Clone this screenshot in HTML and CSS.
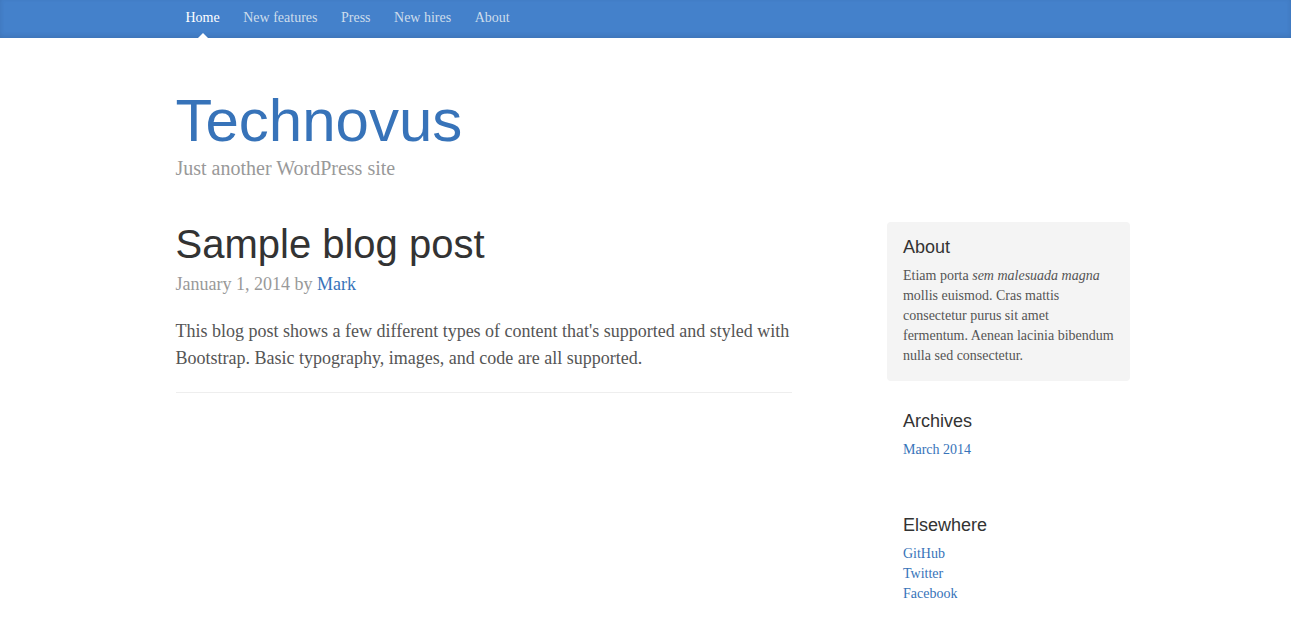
FILE: index.html
```html
<!DOCTYPE html>
<html lang="en">
<head>
<meta charset="utf-8">
<title>Technovus</title>
<link rel="stylesheet" href="styles.css">
</head>
<body>
<div class="blog-masthead">
  <div class="container">
    <nav class="blog-nav">
      <a class="blog-nav-item active" href="#">Home</a>
      <a class="blog-nav-item" href="#">New features</a>
      <a class="blog-nav-item" href="#">Press</a>
      <a class="blog-nav-item" href="#">New hires</a>
      <a class="blog-nav-item" href="#">About</a>
    </nav>
  </div>
</div>

<div class="container">
  <div class="blog-header">
    <h1 class="blog-title"><a href="#">Technovus</a></h1>
    <p class="blog-description">Just another WordPress site</p>
  </div>

  <div class="row">
    <div class="blog-main">
      <div class="blog-post">
        <h2 class="blog-post-title">Sample blog post</h2>
        <p class="blog-post-meta">January 1, 2014 by <a href="#">Mark</a></p>
        <p>This blog post shows a few different types of content that's supported and styled with Bootstrap. Basic typography, images, and code are all supported.</p>
        <hr>
      </div>
    </div>

    <div class="blog-sidebar">
      <div class="sidebar-module sidebar-module-inset">
        <h4>About</h4>
        <p>Etiam porta <em>sem malesuada magna</em> mollis euismod. Cras mattis consectetur purus sit amet fermentum. Aenean lacinia bibendum nulla sed consectetur.</p>
      </div>
      <div class="sidebar-module">
        <h4 class="list-title">Archives</h4>
        <ol class="list-unstyled archives">
          <li><a href="#">March 2014</a></li>
        </ol>
      </div>
      <div class="sidebar-module">
        <h4 class="list-title">Elsewhere</h4>
        <ol class="list-unstyled">
          <li><a href="#">GitHub</a></li>
          <li><a href="#">Twitter</a></li>
          <li><a href="#">Facebook</a></li>
        </ol>
      </div>
    </div>
  </div>
</div>
</body>
</html>
```

FILE: styles.css
```css
* { box-sizing: border-box; }

html, body { margin: 0; padding: 0; }

body {
  font-family: Georgia, "Liberation Serif", "Times New Roman", serif;
  font-size: 14px;
  line-height: 1.42857143;
  color: #555;
  background: #fff;
}

a { color: #3773b9; text-decoration: none; }

h1, h2, h4 {
  margin-top: 0;
  font-family: "Liberation Sans", Helvetica, Arial, sans-serif;
  font-weight: normal;
  color: #333;
  line-height: 1.1;
}

p { margin: 0 0 10px; }

.container {
  width: 970px;
  margin: 0 auto;
  padding: 0 15px;
}

.blog-masthead {
  background-color: #4481cb;
  box-shadow: inset 0 -2px 5px rgba(0, 0, 0, .1);
}

.blog-nav { height: 38px; }

.blog-nav-item {
  position: relative;
  display: inline-block;
  padding: 8px 10px 10px;
  font-weight: 500;
  color: #cdddeb;
}

.blog-nav-item.active { color: #fff; }

.blog-nav-item.active::after {
  position: absolute;
  bottom: 0;
  left: 50%;
  width: 0;
  height: 0;
  margin-left: -5px;
  content: "";
  border-right: 5px solid transparent;
  border-bottom: 5px solid #fff;
  border-left: 5px solid transparent;
}

.blog-header {
  padding-top: 20px;
  padding-bottom: 29px;
}

.blog-title {
  margin-top: 30px;
  margin-bottom: 0;
  font-size: 60px;
}

.blog-description {
  font-size: 20px;
  color: #999;
}

.row {
  display: flex;
  margin: 0 -15px;
}

.blog-main {
  width: 66.6667%;
  padding: 0 15px;
  font-size: 18px;
  line-height: 1.5;
}

.blog-sidebar {
  width: 25%;
  margin-left: 8.3333%;
  padding: 0 15px;
}

.blog-post { margin-bottom: 60px; }

.blog-post-title {
  margin-bottom: 5px;
  font-size: 40px;
}

.blog-post-meta {
  margin-bottom: 20px;
  color: #999;
}

hr {
  margin: 20px 0;
  border: 0;
  border-top: 1px solid #eee;
}

.sidebar-module {
  padding: 15px;
  margin: 0 -15px 15px;
}

.sidebar-module h4 {
  font-size: 18px;
  padding-top: 1px;
  margin-bottom: 9px;
}

.sidebar-module h4.list-title { margin-bottom: 8px; }

.sidebar-module-inset {
  margin-left: -16px;
  padding-left: 16px;
  background-color: #f4f4f4;
  border-radius: 4px;
}

.sidebar-module-inset p:last-child { margin-bottom: 0; }

.list-unstyled {
  list-style: none;
  padding-left: 0;
  margin: 0;
}

.list-unstyled.archives { margin-bottom: 10px; }
```
